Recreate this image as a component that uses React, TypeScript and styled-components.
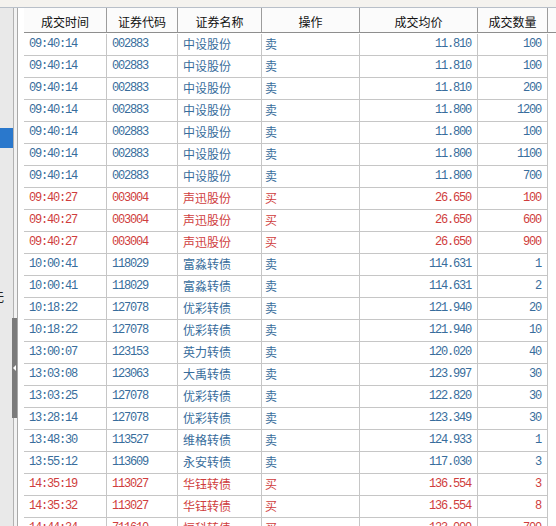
import React from "react";
import styled, { createGlobalStyle } from "styled-components";

const Global = createGlobalStyle`
  html, body { margin: 0; padding: 0; background: #ffffff; }
  body {
    width: 556px;
    height: 526px;
    overflow: hidden;
    font-family: "Noto Sans CJK SC", "Noto Sans", sans-serif;
  }
`;

type Side = "sell" | "buy";
type Align = "left" | "right" | "center";

interface Trade {
  time: string;
  code: string;
  name: string;
  op: string;
  price: string;
  qty: string;
  side: Side;
}

const trades: Trade[] = [
  { time: "09:40:14", code: "002883", name: "中设股份", op: "卖", price: "11.810", qty: "100", side: "sell" },
  { time: "09:40:14", code: "002883", name: "中设股份", op: "卖", price: "11.810", qty: "100", side: "sell" },
  { time: "09:40:14", code: "002883", name: "中设股份", op: "卖", price: "11.810", qty: "200", side: "sell" },
  { time: "09:40:14", code: "002883", name: "中设股份", op: "卖", price: "11.800", qty: "1200", side: "sell" },
  { time: "09:40:14", code: "002883", name: "中设股份", op: "卖", price: "11.800", qty: "100", side: "sell" },
  { time: "09:40:14", code: "002883", name: "中设股份", op: "卖", price: "11.800", qty: "1100", side: "sell" },
  { time: "09:40:14", code: "002883", name: "中设股份", op: "卖", price: "11.800", qty: "700", side: "sell" },
  { time: "09:40:27", code: "003004", name: "声迅股份", op: "买", price: "26.650", qty: "100", side: "buy" },
  { time: "09:40:27", code: "003004", name: "声迅股份", op: "买", price: "26.650", qty: "600", side: "buy" },
  { time: "09:40:27", code: "003004", name: "声迅股份", op: "买", price: "26.650", qty: "900", side: "buy" },
  { time: "10:00:41", code: "118029", name: "富淼转债", op: "卖", price: "114.631", qty: "1", side: "sell" },
  { time: "10:00:41", code: "118029", name: "富淼转债", op: "卖", price: "114.631", qty: "2", side: "sell" },
  { time: "10:18:22", code: "127078", name: "优彩转债", op: "卖", price: "121.940", qty: "20", side: "sell" },
  { time: "10:18:22", code: "127078", name: "优彩转债", op: "卖", price: "121.940", qty: "10", side: "sell" },
  { time: "13:00:07", code: "123153", name: "英力转债", op: "卖", price: "120.020", qty: "40", side: "sell" },
  { time: "13:03:08", code: "123063", name: "大禹转债", op: "卖", price: "123.997", qty: "30", side: "sell" },
  { time: "13:03:25", code: "127078", name: "优彩转债", op: "卖", price: "122.820", qty: "30", side: "sell" },
  { time: "13:28:14", code: "127078", name: "优彩转债", op: "卖", price: "123.349", qty: "30", side: "sell" },
  { time: "13:48:30", code: "113527", name: "维格转债", op: "卖", price: "124.933", qty: "1", side: "sell" },
  { time: "13:55:12", code: "113609", name: "永安转债", op: "卖", price: "117.030", qty: "3", side: "sell" },
  { time: "14:35:19", code: "113027", name: "华钰转债", op: "买", price: "136.554", qty: "3", side: "buy" },
  { time: "14:35:32", code: "113027", name: "华钰转债", op: "买", price: "136.554", qty: "8", side: "buy" },
  { time: "14:44:34", code: "711610", name: "恒科转债", op: "买", price: "123.000", qty: "700", side: "buy" },
];

const COLS = "83px 71px 84px 98px 118px 70px 1fr";

const Window = styled.div`
  width: 556px;
  height: 526px;
  display: flex;
  flex-direction: column;
  overflow: hidden;
  background: #ffffff;
`;

const TopStrip = styled.div`
  flex: none;
  height: 7px;
  background: #f4f2ee;
  border-bottom: 1px solid #b8bfc8;
`;

const Body = styled.div`
  flex: 1;
  min-height: 0;
  display: flex;
  position: relative;
`;

const SidePanel = styled.div`
  flex: none;
  width: 13px;
  background: #e9e9e9;
  border-right: 1px solid #b2b2b2;
  overflow: hidden;
  display: flex;
  flex-direction: column;
`;

const SideSelected = styled.div`
  margin-top: 120px;
  height: 20px;
  background: #2a78cc;
`;

const SideLabel = styled.div`
  margin-top: 142px;
  margin-left: -8px;
  font-size: 12px;
  line-height: 14px;
  color: #222222;
  white-space: nowrap;
`;

const Gutter = styled.div`
  flex: none;
  width: 3px;
  background: #f3f3f3;
  border-right: 1px solid #a9a9a9;
`;

const Splitter = styled.div`
  position: absolute;
  left: 12px;
  top: 310px;
  width: 5px;
  height: 100px;
  background: #7b7b7b;
  display: flex;
  align-items: center;
  justify-content: center;
`;

const SplitterArrow = styled.div`
  width: 0;
  height: 0;
  border-top: 3px solid transparent;
  border-bottom: 3px solid transparent;
  border-right: 3px solid #ffffff;
`;

const TableArea = styled.div`
  flex: 1;
  min-width: 0;
  padding-left: 6px;
  background: #ffffff;
  overflow: hidden;
  display: flex;
  flex-direction: column;
`;

const HeaderRow = styled.div`
  display: grid;
  grid-template-columns: ${COLS};
  flex: none;
`;

const HeaderCell = styled.div<{ $filler?: boolean }>`
  box-sizing: border-box;
  height: 25px;
  padding-top: 2px;
  background: #fbfbfb;
  border-bottom: 1px solid #8e8e8e;
  border-right: ${(p) => (p.$filler ? "none" : "1px solid #9c9c9c")};
  display: flex;
  align-items: center;
  justify-content: center;
  font-size: 12px;
  color: #111111;
  white-space: nowrap;
`;

const Rows = styled.div`
  padding-top: 1px;
  display: flex;
  flex-direction: column;
`;

const Row = styled.div`
  display: grid;
  grid-template-columns: ${COLS};
  flex: none;
`;

const Cell = styled.div<{ $side: Side; $align: Align; $mono?: boolean; $pad?: number }>`
  box-sizing: border-box;
  height: 22px;
  line-height: ${(p) => (p.$mono ? 21 : 19)}px;
  border-bottom: 1px solid #c6c6c6;
  border-right: 1px solid #c6c6c6;
  padding: 0 ${(p) => (p.$align === "right" ? 6 : 0)}px 0 ${(p) => (p.$align === "left" ? p.$pad ?? 5 : 0)}px;
  text-align: ${(p) => p.$align};
  color: ${(p) => (p.$side === "buy" ? "#cf3d3d" : "#386d9c")};
  font-family: ${(p) =>
    p.$mono
      ? '"Liberation Mono", "DejaVu Sans Mono", monospace'
      : '"Noto Sans CJK SC", "Noto Sans", sans-serif'};
  font-size: 12px;
  letter-spacing: ${(p) => (p.$mono ? "-1.2px" : "0")};
  white-space: nowrap;
  overflow: hidden;
`;

const Filler = styled.div`
  height: 22px;
`;

const headers = ["成交时间", "证券代码", "证券名称", "操作", "成交均价", "成交数量"];

export default function App() {
  return (
    <>
      <Global />
      <Window>
        <TopStrip />
        <Body>
          <SidePanel>
            <SideSelected />
            <SideLabel>无</SideLabel>
          </SidePanel>
          <Gutter />
          <Splitter>
            <SplitterArrow />
          </Splitter>
          <TableArea>
            <HeaderRow>
              {headers.map((h) => (
                <HeaderCell key={h}>{h}</HeaderCell>
              ))}
              <HeaderCell $filler />
            </HeaderRow>
            <Rows>
              {trades.map((t, i) => (
                <Row key={i}>
                  <Cell $side={t.side} $align="left" $mono>{t.time}</Cell>
                  <Cell $side={t.side} $align="left" $mono>{t.code}</Cell>
                  <Cell $side={t.side} $align="left">{t.name}</Cell>
                  <Cell $side={t.side} $align="left" $pad={3}>{t.op}</Cell>
                  <Cell $side={t.side} $align="right" $mono>{t.price}</Cell>
                  <Cell $side={t.side} $align="right" $mono>{t.qty}</Cell>
                  <Filler />
                </Row>
              ))}
            </Rows>
          </TableArea>
        </Body>
      </Window>
    </>
  );
}
